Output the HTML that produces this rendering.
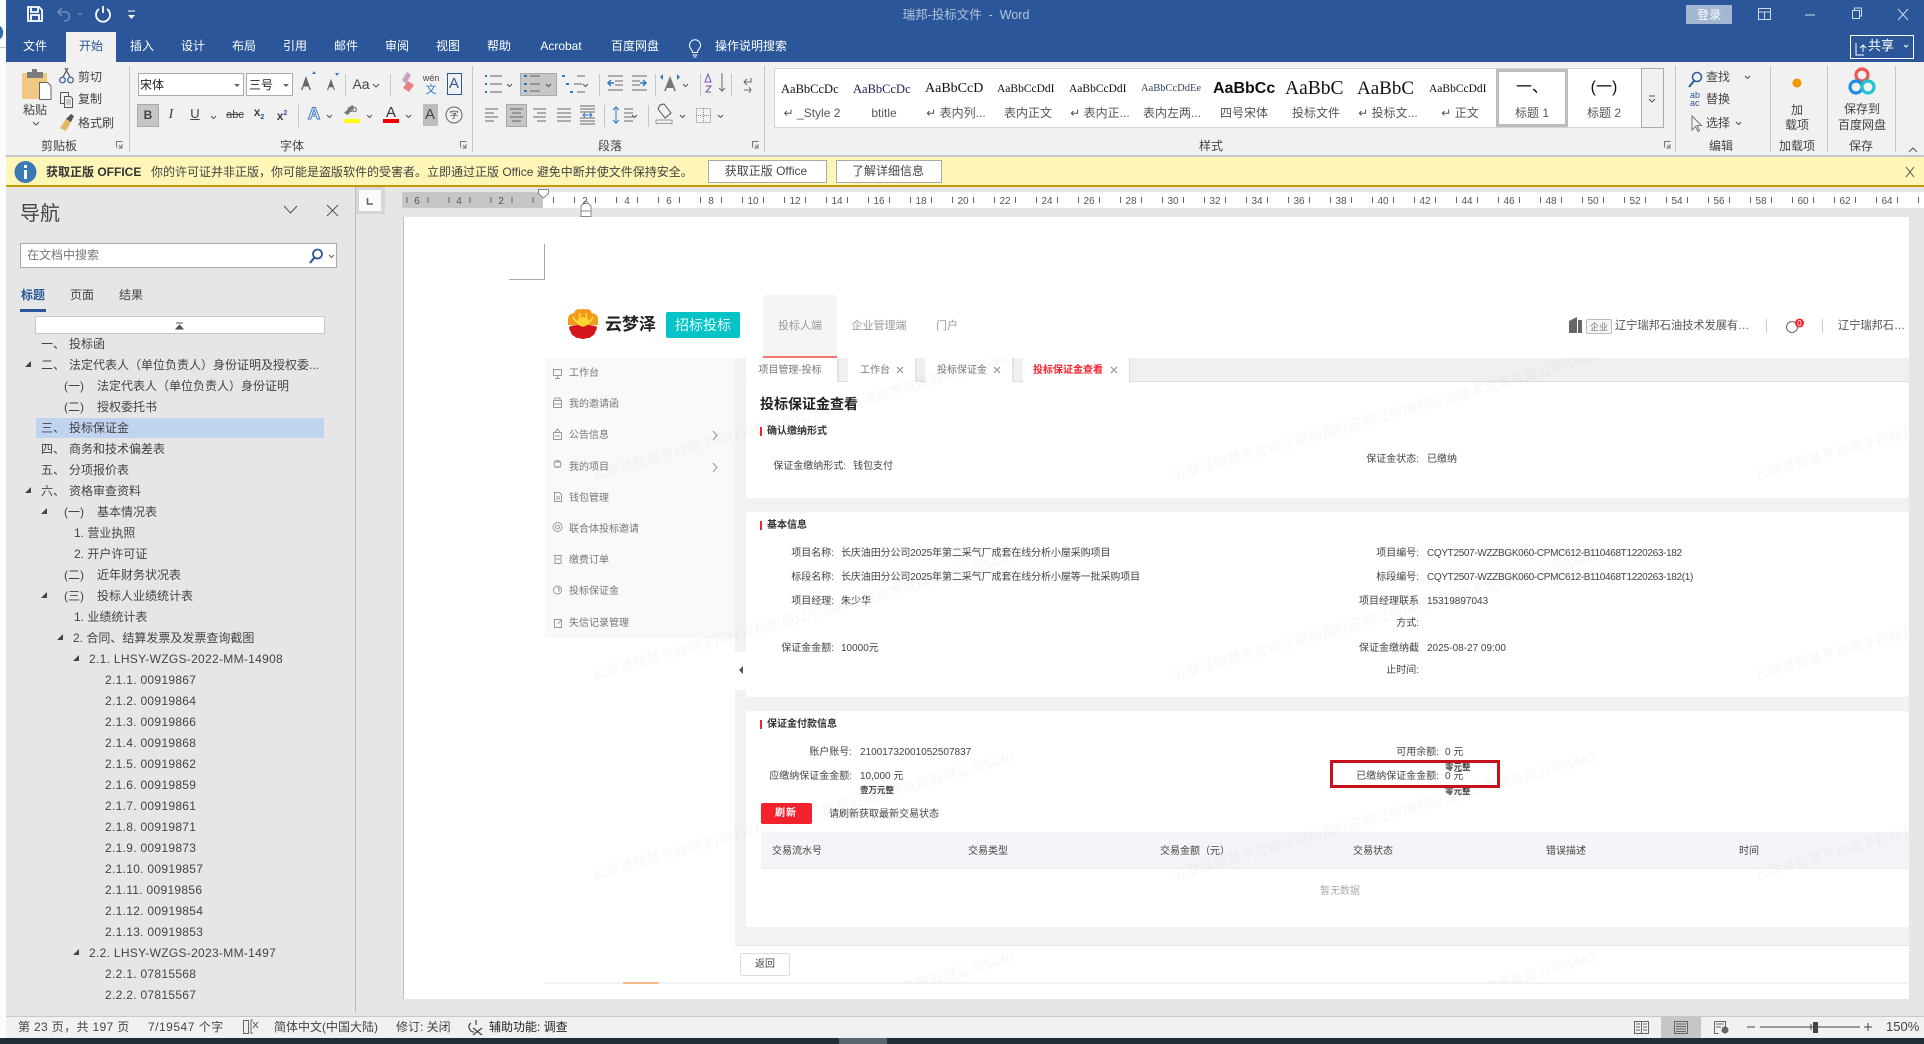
<!DOCTYPE html>
<html lang="zh"><head><meta charset="utf-8"><title>瑞邦-投标文件 - Word</title>
<style>
html,body{margin:0;padding:0}
body{position:relative;width:1924px;height:1044px;overflow:hidden;background:#e6e6e6;font:12px/16px "Liberation Sans","Noto Sans CJK SC",sans-serif;color:#444}
.b{position:absolute;box-sizing:border-box}
.t,.c,.r{position:absolute;white-space:nowrap;line-height:16px}
.t{transform:translateY(-50%)}
.c{transform:translate(-50%,-50%)}
.r{transform:translate(-100%,-50%)}
.w{color:#fff}
.w10{font-size:10px;color:#444}
.w10 .t,.w10 .r,.w10 .c{font-size:10px;margin-top:1px}
.h{font-weight:700;color:#333}
.s{font-family:"Liberation Serif","Noto Serif CJK SC",serif;color:#111;overflow:hidden;width:62px;text-align:left}
.l{color:#555;font-size:12px}
#ov{position:absolute;left:0;top:0;pointer-events:none}
</style></head><body>

<!-- left window sliver -->
<div class="b" style="left:0;top:0;width:6px;height:1038px;background:#fbfbfb"></div>
<div class="b" style="left:0;top:47px;width:6px;height:1px;background:#c8c8c8"></div>

<!-- title bar -->
<div class="b" style="left:6px;top:0;width:1918px;height:62px;background:#2b579a"></div>
<div class="c" style="left:966px;top:15px;color:#b4c4dc;font-size:12.5px">瑞邦-投标文件 &nbsp;-&nbsp; Word</div>
<div class="b" style="left:1686px;top:5px;width:46px;height:19px;background:#a3b6d2"></div>
<div class="c" style="left:1709px;top:15px;color:#fff">登录</div>
<div class="b" style="left:66px;top:32px;width:50px;height:30px;background:#f1f1f1"></div>
<div class="c w" style="left:35px;top:46px">文件</div>
<div class="c" style="left:91px;top:46px;color:#2b579a">开始</div>
<div class="c w" style="left:142px;top:46px">插入</div>
<div class="c w" style="left:193px;top:46px">设计</div>
<div class="c w" style="left:244px;top:46px">布局</div>
<div class="c w" style="left:295px;top:46px">引用</div>
<div class="c w" style="left:346px;top:46px">邮件</div>
<div class="c w" style="left:397px;top:46px">审阅</div>
<div class="c w" style="left:448px;top:46px">视图</div>
<div class="c w" style="left:499px;top:46px">帮助</div>
<div class="c w" style="left:561px;top:46px">Acrobat</div>
<div class="c w" style="left:635px;top:46px">百度网盘</div>
<div class="c w" style="left:751px;top:46px">操作说明搜索</div>
<div class="b" style="left:1850px;top:35px;width:64px;height:24px;border:1px solid #fff"></div>
<div class="c w" style="left:1881px;top:46px;font-size:13px">共享</div>

<!-- ribbon -->
<div class="b" style="left:6px;top:62px;width:1918px;height:95px;background:#f1f1f1;border-bottom:2px solid #c6c6c6"></div>
<div class="c" style="left:35px;top:110px">粘贴</div>
<div class="t" style="left:78px;top:77px">剪切</div>
<div class="t" style="left:78px;top:99px">复制</div>
<div class="t" style="left:78px;top:123px">格式刷</div>
<div class="c" style="left:59px;top:146px">剪贴板</div>
<div class="c" style="left:292px;top:146px">字体</div>
<div class="c" style="left:610px;top:146px">段落</div>
<div class="c" style="left:1211px;top:146px">样式</div>
<div class="c" style="left:1721px;top:146px">编辑</div>
<div class="c" style="left:1797px;top:146px">加载项</div>
<div class="c" style="left:1861px;top:146px">保存</div>

<div class="b" style="left:138px;top:73px;width:106px;height:23px;background:#fff;border:1px solid #aaa"></div>
<div class="b" style="left:246px;top:73px;width:47px;height:23px;background:#fff;border:1px solid #aaa"></div>
<div class="t" style="left:140px;top:85px;color:#222">宋体</div>
<div class="t" style="left:249px;top:85px;color:#222">三号</div>
<div class="c" style="left:361px;top:84px;font-size:14px">Aa</div>
<div class="b" style="left:137px;top:104px;width:22px;height:23px;background:#c6c6c6;border:1px solid #aaa"></div>
<div class="c" style="left:148px;top:115px;font-weight:700">B</div>
<div class="c" style="left:171px;top:115px;font-style:italic;font-family:'Liberation Serif',serif;font-size:14px">I</div>
<div class="c" style="left:195px;top:114px;text-decoration:underline;font-size:13px">U</div>
<div class="c" style="left:235px;top:115px;text-decoration:line-through;font-size:11px">abc</div>
<div class="c" style="left:259px;top:115px;font-weight:700">x<sub style="font-size:7px;color:#2b579a">2</sub></div>
<div class="c" style="left:282px;top:115px;font-weight:700">x<sup style="font-size:7px;color:#2b579a">2</sup></div>
<div class="c" style="left:314px;top:114px;font-size:17px;color:#fff;-webkit-text-stroke:1px #3a78c2;font-weight:700">A</div>
<div class="c" style="left:391px;top:113px;font-size:15px;color:#333">A</div>
<div class="b" style="left:423px;top:104px;width:15px;height:22px;background:#bdbdbd"></div>
<div class="c" style="left:430px;top:115px;font-size:15px;color:#444">A</div>
<div class="c" style="left:431px;top:78px;font-size:9px;color:#444">wén</div>
<div class="c" style="left:431px;top:90px;font-size:11px;color:#2b79c2">文</div>
<div class="c" style="left:454px;top:84px;font-size:15px;color:#2b579a">A</div>
<div class="c" style="left:454px;top:115px;font-size:9px">字</div>
<div class="c" style="left:352px;top:109px;font-size:9px;color:#444">ab</div>
<div class="b" style="left:520px;top:73px;width:37px;height:23px;background:#c6c6c6;border:1px solid #aaa"></div>
<div class="b" style="left:506px;top:104px;width:21px;height:23px;background:#c6c6c6;border:1px solid #aaa"></div>

<!-- styles gallery -->
<div class="b" style="left:774px;top:68px;width:890px;height:60px;background:#fff;border:1px solid #d4d4d4"></div>
<div class="b" style="left:1496px;top:69px;width:72px;height:58px;background:#fff;border:3px solid #bdbdbd"></div>
<div class="b" style="left:1641px;top:68px;width:23px;height:60px;background:#f1f1f1;border:1px solid #aaa"></div>
<div class="c s" style="left:812px;top:89px;font-size:12.5px">AaBbCcDc</div>
<div class="c s" style="left:884px;top:89px;font-size:12.5px;color:#225">AaBbCcDc</div>
<div class="c s" style="left:956px;top:89px;font-size:14px">AaBbCcD</div>
<div class="c s" style="left:1028px;top:89px;font-size:11.5px">AaBbCcDdI</div>
<div class="c s" style="left:1100px;top:89px;font-size:11.5px">AaBbCcDdI</div>
<div class="c s" style="left:1172px;top:89px;font-size:10.5px;color:#345">AaBbCcDdEe</div>
<div class="c s" style="left:1244px;top:89px;font-size:16px;font-family:'Liberation Sans',sans-serif;font-weight:700">AaBbCc</div>
<div class="c s" style="left:1316px;top:89px;font-size:19.5px">AaBbC</div>
<div class="c s" style="left:1388px;top:89px;font-size:19px">AaBbC</div>
<div class="c s" style="left:1460px;top:89px;font-size:11.5px">AaBbCcDdI</div>
<div class="c" style="left:1532px;top:88px;font-size:16px;color:#111">一、</div>
<div class="c" style="left:1604px;top:88px;font-size:16px;color:#111">(一)</div>
<div class="c l" style="left:812px;top:113px">↵ _Style 2</div>
<div class="c l" style="left:884px;top:113px">btitle</div>
<div class="c l" style="left:956px;top:113px">↵ 表内列...</div>
<div class="c l" style="left:1028px;top:113px">表内正文</div>
<div class="c l" style="left:1100px;top:113px">↵ 表内正...</div>
<div class="c l" style="left:1172px;top:113px">表内左两...</div>
<div class="c l" style="left:1244px;top:113px">四号宋体</div>
<div class="c l" style="left:1316px;top:113px">投标文件</div>
<div class="c l" style="left:1388px;top:113px">↵ 投标文...</div>
<div class="c l" style="left:1460px;top:113px">↵ 正文</div>
<div class="c l" style="left:1532px;top:113px">标题 1</div>
<div class="c l" style="left:1604px;top:113px">标题 2</div>

<div class="c" style="left:1718px;top:77px">查找</div>
<div class="c" style="left:1718px;top:99px">替换</div>
<div class="c" style="left:1718px;top:123px">选择</div>
<div class="c" style="left:1695px;top:99px;font-size:9px;line-height:8px;color:#2b579a">ab<br>ac</div>
<div class="c" style="left:1797px;top:110px">加</div>
<div class="c" style="left:1797px;top:125px">载项</div>
<div class="c" style="left:1862px;top:109px">保存到</div>
<div class="c" style="left:1862px;top:125px">百度网盘</div>

<!-- yellow message bar -->
<div class="b" style="left:6px;top:157px;width:1918px;height:30px;background:#fdf6b6;border-bottom:2px solid #c49a00"></div>
<div class="t" style="left:46px;top:172px;font-weight:700;color:#333">获取正版 OFFICE</div>
<div class="t" style="left:151px;top:172px;color:#444">你的许可证并非正版，你可能是盗版软件的受害者。立即通过正版 Office 避免中断并使文件保持安全。</div>
<div class="b" style="left:708px;top:160px;width:119px;height:23px;background:#fff;border:1px solid #aaa"></div>
<div class="c" style="left:766px;top:171px">获取正版 Office</div>
<div class="b" style="left:836px;top:160px;width:106px;height:23px;background:#fff;border:1px solid #aaa"></div>
<div class="c" style="left:888px;top:171px">了解详细信息</div>

<!-- nav pane -->
<div class="b" style="left:355px;top:187px;width:1px;height:826px;background:#bdbdbd"></div>
<div class="t" style="left:20px;top:214px;font-size:20px;line-height:26px;color:#444">导航</div>
<div class="b" style="left:20px;top:243px;width:317px;height:25px;background:#fff;border:1px solid #aaa"></div>
<div class="t" style="left:27px;top:255px;color:#777">在文档中搜索</div>
<div class="t" style="left:21px;top:295px;color:#2b579a;font-weight:700">标题</div>
<div class="t" style="left:70px;top:295px">页面</div>
<div class="t" style="left:119px;top:295px">结果</div>
<div class="b" style="left:20px;top:309px;width:26px;height:3px;background:#2b579a"></div>
<div class="b" style="left:35px;top:316px;width:290px;height:18px;background:#fff;border:1px solid #c8c8c8"></div>
<div class="b" style="left:36px;top:418px;width:288px;height:20px;background:#c0d3ef"></div>

<div class="t" style="left:41px;top:344px">一、</div><div class="t" style="left:69px;top:344px">投标函</div>
<div class="t" style="left:41px;top:365px">二、</div><div class="t" style="left:69px;top:365px">法定代表人（单位负责人）身份证明及授权委...</div>
<div class="t" style="left:64px;top:386px">(一)</div><div class="t" style="left:97px;top:386px">法定代表人（单位负责人）身份证明</div>
<div class="t" style="left:64px;top:407px">(二)</div><div class="t" style="left:97px;top:407px">授权委托书</div>
<div class="t" style="left:41px;top:428px">三、</div><div class="t" style="left:69px;top:428px">投标保证金</div>
<div class="t" style="left:41px;top:449px">四、</div><div class="t" style="left:69px;top:449px">商务和技术偏差表</div>
<div class="t" style="left:41px;top:470px">五、</div><div class="t" style="left:69px;top:470px">分项报价表</div>
<div class="t" style="left:41px;top:491px">六、</div><div class="t" style="left:69px;top:491px">资格审查资料</div>
<div class="t" style="left:64px;top:512px">(一)</div><div class="t" style="left:97px;top:512px">基本情况表</div>
<div class="t" style="left:74px;top:533px">1. 营业执照</div>
<div class="t" style="left:74px;top:554px">2. 开户许可证</div>
<div class="t" style="left:64px;top:575px">(二)</div><div class="t" style="left:97px;top:575px">近年财务状况表</div>
<div class="t" style="left:64px;top:596px">(三)</div><div class="t" style="left:97px;top:596px">投标人业绩统计表</div>
<div class="t" style="left:74px;top:617px">1. 业绩统计表</div>
<div class="t" style="left:73px;top:638px">2. 合同、结算发票及发票查询截图</div>
<div class="t" style="left:89px;top:659px;letter-spacing:.3px">2.1. LHSY-WZGS-2022-MM-14908</div>
<div class="t" style="left:105px;top:680px;letter-spacing:.3px">2.1.1. 00919867</div>
<div class="t" style="left:105px;top:701px;letter-spacing:.3px">2.1.2. 00919864</div>
<div class="t" style="left:105px;top:722px;letter-spacing:.3px">2.1.3. 00919866</div>
<div class="t" style="left:105px;top:743px;letter-spacing:.3px">2.1.4. 00919868</div>
<div class="t" style="left:105px;top:764px;letter-spacing:.3px">2.1.5. 00919862</div>
<div class="t" style="left:105px;top:785px;letter-spacing:.3px">2.1.6. 00919859</div>
<div class="t" style="left:105px;top:806px;letter-spacing:.3px">2.1.7. 00919861</div>
<div class="t" style="left:105px;top:827px;letter-spacing:.3px">2.1.8. 00919871</div>
<div class="t" style="left:105px;top:848px;letter-spacing:.3px">2.1.9. 00919873</div>
<div class="t" style="left:105px;top:869px;letter-spacing:.3px">2.1.10. 00919857</div>
<div class="t" style="left:105px;top:890px;letter-spacing:.3px">2.1.11. 00919856</div>
<div class="t" style="left:105px;top:911px;letter-spacing:.3px">2.1.12. 00919854</div>
<div class="t" style="left:105px;top:932px;letter-spacing:.3px">2.1.13. 00919853</div>
<div class="t" style="left:89px;top:953px;letter-spacing:.3px">2.2. LHSY-WZGS-2023-MM-1497</div>
<div class="t" style="left:105px;top:974px;letter-spacing:.3px">2.2.1. 07815568</div>
<div class="t" style="left:105px;top:995px;letter-spacing:.3px">2.2.2. 07815567</div>

<!-- ruler -->
<div class="b" style="left:402px;top:192px;width:1522px;height:16px;background:#fff"></div>
<div class="b" style="left:402px;top:192px;width:141px;height:16px;background:#c6c6c6"></div>
<div class="b" style="left:356px;top:187px;width:29px;height:27px;background:#d6d6d6"></div>
<div class="b" style="left:359px;top:190px;width:22px;height:21px;background:#fafafa"></div>

<!-- page -->
<div class="b" style="left:403px;top:217px;width:1506px;height:782px;background:#fff;border-left:1px solid #bdbdbd"></div>

<!-- web app -->
<div class="b" style="left:735px;top:358px;width:1174px;height:587px;background:#f2f2f2"></div>
<div class="b" style="left:545px;top:358px;width:190px;height:280px;background:#f9f9f9"></div>
<div class="b" style="left:735px;top:652px;width:14px;height:38px;background:#fff;border-radius:0 5px 5px 0"></div>
<div class="b" style="left:763px;top:295px;width:74px;height:63px;background:#f5f5f5;border-bottom:2px solid #f0766e"></div>
<div class="t" style="left:605px;top:325px;font-size:17px;line-height:22px;font-weight:700;color:#222">云梦泽</div>
<div class="b" style="left:666px;top:312px;width:74px;height:26px;background:#05c3c6;border-radius:2px"></div>
<div class="c" style="left:703px;top:325px;font-size:14px;color:#e6ffff">招标投标</div>
<div class="c" style="left:800px;top:326px;font-size:11px;color:#999">投标人端</div>
<div class="c" style="left:879px;top:326px;font-size:11px;color:#999">企业管理端</div>
<div class="c" style="left:947px;top:326px;font-size:11px;color:#999">门户</div>
<div class="b" style="left:1586px;top:319px;width:26px;height:15px;background:#f6f6f6;border:1px solid #bbb;border-radius:2px"></div>
<div class="c" style="left:1599px;top:327px;font-size:9px;color:#777">企业</div>
<div class="t" style="left:1615px;top:326px;font-size:11.2px;color:#555">辽宁瑞邦石油技术发展有…</div>
<div class="b" style="left:1766px;top:319px;width:1px;height:14px;background:#ccc"></div>
<div class="b" style="left:1822px;top:319px;width:1px;height:14px;background:#ccc"></div>
<div class="t" style="left:1838px;top:326px;font-size:11.2px;color:#555">辽宁瑞邦石…</div>

<div class="w10">
<div class="t" style="left:569px;top:373px;color:#777">工作台</div>
<div class="t" style="left:569px;top:404px;color:#777">我的邀请函</div>
<div class="t" style="left:569px;top:435px;color:#777">公告信息</div>
<div class="t" style="left:569px;top:467px;color:#777">我的项目</div>
<div class="t" style="left:569px;top:498px;color:#777">钱包管理</div>
<div class="t" style="left:569px;top:529px;color:#777">联合体投标邀请</div>
<div class="t" style="left:569px;top:560px;color:#777">缴费订单</div>
<div class="t" style="left:569px;top:591px;color:#777">投标保证金</div>
<div class="t" style="left:569px;top:623px;color:#777">失信记录管理</div>

<div class="b" style="left:746px;top:358px;width:1163px;height:24px;background:#f0f0f0;border-bottom:1px solid #ddd"></div>
<div class="b" style="left:746px;top:358px;width:93px;height:24px;background:#fff;border-right:2px solid #e4e4e4"></div>
<div class="b" style="left:848px;top:358px;width:69px;height:24px;background:#fff;border-right:2px solid #e4e4e4"></div>
<div class="b" style="left:925px;top:358px;width:89px;height:24px;background:#fff;border-right:2px solid #e4e4e4"></div>
<div class="b" style="left:1023px;top:358px;width:107px;height:25px;background:#fff;border-right:1px solid #ddd"></div>
<div class="c" style="left:790px;top:370px;color:#777">项目管理-投标</div>
<div class="c" style="left:875px;top:370px;color:#777">工作台</div>
<div class="c" style="left:962px;top:370px;color:#777">投标保证金</div>
<div class="c" style="left:1068px;top:370px;color:#f5222d;font-weight:700">投标保证金查看</div>

<div class="b" style="left:746px;top:382px;width:1163px;height:116px;background:#fff;border-radius:3px"></div>
<div class="b" style="left:746px;top:512px;width:1163px;height:185px;background:#fff;border-radius:3px"></div>
<div class="b" style="left:746px;top:711px;width:1163px;height:216px;background:#fff;border-radius:3px"></div>
<div class="b" style="left:735px;top:945px;width:1174px;height:38px;background:#fff;border-top:1px solid #e4e4e4"></div>

<div class="t" style="left:760px;top:403px;font-size:14px;line-height:20px;font-weight:700;color:#222">投标保证金查看</div>
<div class="b" style="left:760px;top:427px;width:2px;height:9px;background:#f5222d"></div>
<div class="t h" style="left:767px;top:431px">确认缴纳形式</div>
<div class="r" style="left:846px;top:466px">保证金缴纳形式:</div><div class="t" style="left:853px;top:466px">钱包支付</div>
<div class="r" style="left:1419px;top:459px">保证金状态:</div><div class="t" style="left:1427px;top:459px">已缴纳</div>

<div class="b" style="left:760px;top:521px;width:2px;height:9px;background:#f5222d"></div>
<div class="t h" style="left:767px;top:525px">基本信息</div>
<div class="r" style="left:834px;top:553px">项目名称:</div><div class="t" style="left:841px;top:553px;letter-spacing:-.1px">长庆油田分公司2025年第二采气厂成套在线分析小屋采购项目</div>
<div class="r" style="left:834px;top:577px">标段名称:</div><div class="t" style="left:841px;top:577px;letter-spacing:-.1px">长庆油田分公司2025年第二采气厂成套在线分析小屋等一批采购项目</div>
<div class="r" style="left:834px;top:601px">项目经理:</div><div class="t" style="left:841px;top:601px">朱少华</div>
<div class="r" style="left:834px;top:648px">保证金金额:</div><div class="t" style="left:841px;top:648px">10000元</div>
<div class="r" style="left:1419px;top:553px">项目编号:</div><div class="t" style="left:1427px;top:553px;letter-spacing:-.33px">CQYT2507-WZZBGK060-CPMC612-B110468T1220263-182</div>
<div class="r" style="left:1419px;top:577px">标段编号:</div><div class="t" style="left:1427px;top:577px;letter-spacing:-.33px">CQYT2507-WZZBGK060-CPMC612-B110468T1220263-182(1)</div>
<div class="r" style="left:1419px;top:601px">项目经理联系</div><div class="t" style="left:1427px;top:601px">15319897043</div>
<div class="r" style="left:1419px;top:623px">方式:</div>
<div class="r" style="left:1419px;top:648px">保证金缴纳截</div><div class="t" style="left:1427px;top:648px">2025-08-27 09:00</div>
<div class="r" style="left:1419px;top:670px">止时间:</div>

<div class="b" style="left:760px;top:720px;width:2px;height:9px;background:#f5222d"></div>
<div class="t h" style="left:767px;top:724px">保证金付款信息</div>
<div class="r" style="left:852px;top:752px">账户账号:</div><div class="t" style="left:860px;top:752px">21001732001052507837</div>
<div class="r" style="left:852px;top:776px">应缴纳保证金金额:</div><div class="t" style="left:860px;top:776px">10,000 元</div>
<div class="t" style="left:860px;top:789px;font-size:8.5px;font-weight:700">壹万元整</div>
<div class="r" style="left:1439px;top:752px">可用余额:</div><div class="t" style="left:1445px;top:752px">0 元</div>
<div class="t" style="left:1445px;top:766px;font-size:8.5px;font-weight:700">零元整</div>
<div class="r" style="left:1439px;top:776px">已缴纳保证金金额:</div><div class="t" style="left:1445px;top:776px">0 元</div>
<div class="t" style="left:1445px;top:790px;font-size:8.5px;font-weight:700">零元整</div>
<div class="b" style="left:761px;top:803px;width:51px;height:21px;background:#f5222d;border-radius:2px"></div>
<div class="c" style="left:786px;top:813px;color:#fff;font-weight:700;letter-spacing:1px">刷新</div>
<div class="t" style="left:829px;top:814px">请刷新获取最新交易状态</div>
<div class="b" style="left:761px;top:832px;width:1148px;height:37px;background:#f4f5f9;border-bottom:1px solid #eceef2"></div>
<div class="t" style="left:772px;top:851px">交易流水号</div>
<div class="t" style="left:968px;top:851px">交易类型</div>
<div class="t" style="left:1160px;top:851px">交易金额（元）</div>
<div class="t" style="left:1353px;top:851px">交易状态</div>
<div class="t" style="left:1546px;top:851px">错误描述</div>
<div class="t" style="left:1739px;top:851px">时间</div>
<div class="t" style="left:1320px;top:891px;color:#aaa">暂无数据</div>
<div class="b" style="left:740px;top:953px;width:50px;height:23px;background:#fff;border:1px solid #ddd;border-radius:2px"></div>
<div class="c" style="left:765px;top:964px">返回</div>
</div>
<div class="b" style="left:545px;top:982px;width:1364px;height:2px;background:#eef3f8"></div>
<div class="b" style="left:623px;top:982px;width:36px;height:2px;background:#f7b98a"></div>

<!-- status bar -->
<div class="b" style="left:6px;top:1016px;width:1918px;height:22px;background:#f1f1f1;border-top:1px solid #c8c8c8"></div>
<div class="b" style="left:1661px;top:1017px;width:40px;height:21px;background:#c6c6c6"></div>
<div class="t" style="left:18px;top:1027px;letter-spacing:.35px">第 23 页，共 197 页</div>
<div class="t" style="left:148px;top:1027px;letter-spacing:.5px">7/19547 个字</div>
<div class="t" style="left:274px;top:1027px">简体中文(中国大陆)</div>
<div class="t" style="left:396px;top:1027px">修订: 关闭</div>
<div class="t" style="left:489px;top:1027px;color:#222">辅助功能: 调查</div>
<div class="t" style="left:1886px;top:1027px;font-size:13px">150%</div>
<div class="b" style="left:0;top:1038px;width:1924px;height:6px;background:#1f2e38"></div>
<div class="b" style="left:839px;top:1038px;width:48px;height:6px;background:#59646c"></div>

<!-- overlay graphics -->
<svg id="ov" width="1924" height="1044" viewBox="0 0 1924 1044" fill="none">
<defs>
<clipPath id="wm"><rect x="545" y="358" width="1364" height="625"/></clipPath>
<pattern id="tk" x="553" y="195" width="21" height="10" patternUnits="userSpaceOnUse"><rect x="0" y="2" width="1" height="6" fill="#666"/></pattern>
<pattern id="tk2" x="406.5" y="195" width="21" height="10" patternUnits="userSpaceOnUse"><rect x="0" y="2" width="1" height="6" fill="#666"/></pattern>
</defs>
<!-- window sliver -->
<path d="M0 26a5 7 0 0 1 0 13z" fill="#2b6cb0"/>

<!-- QAT -->
<g stroke="#fff" stroke-width="1.8"><path d="M28 7h11l3 3v11H28z"/><path d="M31 7v5h7V7M31 21v-6h8v6"/></g>
<g stroke="#6f8bb8" stroke-width="1.6"><path d="M62 8l-4 4 4 4"/><path d="M58 12h7a4.5 4.5 0 0 1 0 9h-1"/><path d="M78 13l2 2 2-2" stroke-width="1"/></g>
<g stroke="#fff" stroke-width="1.8"><path d="M99 9a7 7 0 1 0 8 0"/><path d="M103 6v7"/></g>
<path d="M128 11h7" stroke="#fff"/><path d="M128 15h7l-3.5 4z" fill="#fff"/>
<!-- bulb, share, win controls -->
<g stroke="#fff"><path d="M691 49a5.5 5.5 0 1 1 8 0c-1 1-1.500 2-1.500 3.500h-5c0-1.500-.5-2.500-1.500-3.500zM692.500 55h5M693.500 57h3"/>
<path d="M1856 43v12h8M1860 48l3-3 3 3M1863 45v7" stroke-width="1"/><path d="M1904 45l2 2 2-2"/></g>
<g stroke="#cfd9e8"><path d="M1758.500 8.500h12v11h-12zM1758.500 12h12M1764.500 12v7"/><path d="M1805 15h10"/><path d="M1852.500 10.500h7v8h-7zM1854.500 10v-2h7v8h-2"/><path d="M1898 9l10 11M1908 9l-10 11"/></g>

<!-- clipboard group -->
<rect x="22" y="73" width="25" height="26" fill="#efc981"/><rect x="27" y="72" width="16" height="6" fill="#7c7c7c"/><rect x="32" y="69" width="5" height="5" fill="#7c7c7c"/>
<path d="M39.500 82.500h8l3.500 3.500v13.500H39.500z" fill="#fff" stroke="#666"/>
<path d="M33 122l3 3 3-3" stroke="#555"/>
<g stroke="#4a6fa5" stroke-width="1.4"><circle cx="62.500" cy="80" r="2.800"/><circle cx="70.500" cy="80" r="2.800"/></g><path d="M63 77l5-9M70 77l-5-9" stroke="#666" stroke-width="1.300"/>
<g stroke="#555"><path d="M60.500 92.500h8v4M60.500 92.500v11h4"/><path d="M64.500 96.500h6l2 2v9h-8z" fill="#f1f1f1"/><path d="M66 100h5M66 102h5M66 104h5" stroke="#999"/></g>
<path d="M60 128l6-9 5 3-5 9z" fill="#e3b968"/><path d="M66 119l5-5 3 2-3 6z" fill="#555"/>
<!-- separators -->
<g stroke="#c6c6c6"><path d="M129.500 66v86M472.500 66v86M764.500 66v86M1675.500 66v86M1770.500 66v86M1827.500 66v86M1895.500 66v86"/>
<path d="M345.500 74v22M390.500 74v22M298.500 105v22M599.500 74v22M655.500 74v22M700.500 74v22M731.500 74v22M604.500 105v22M648.500 105v22"/></g>
<!-- dialog launchers -->
<g stroke="#777"><path d="M116.500 147.500v-6h6M119 145l3 3M118 148h4v-4M460.500 147.500v-6h6M463 145l3 3M462 148h4v-4M752.500 147.500v-6h6M755 145l3 3M754 148h4v-4M1664.500 147.500v-6h6M1667 145l3 3M1666 148h4v-4"/></g>
<path d="M1909 152l4-4 4 4" stroke="#555"/>
<!-- dropdown triangles -->
<g fill="#666"><path d="M234 84h6l-3 3zM283 84h6l-3 3z"/></g>
<g stroke="#555"><path d="M373 84l3 3 3-3M211 116l2.500 2.500 2.500-2.500M327 115l2.500 2.500 2.500-2.500M367 115l2.500 2.500 2.500-2.500M406 115l2.500 2.500 2.500-2.500M507 84l2.500 2.500 2.500-2.500M546 84l2.500 2.500 2.500-2.500M583 84l2.500 2.500 2.500-2.500M683 84l2.500 2.500 2.500-2.500M632 115l2.500 2.500 2.500-2.500M680 115l2.500 2.500 2.500-2.500M718 115l2.500 2.500 2.500-2.500M1745 76l2.500 2.500 2.500-2.500M1736 122l2.500 2.500 2.500-2.500"/></g>
<!-- font group icons -->
<path d="M306 76l-5 14h1.500l1.200-3.500h4.600l1.200 3.500h1.500l-5-14z" fill="#666"/><path d="M312 74l2-3 2 3z" fill="#3a78c2"/>
<path d="M331 79l-4 11h1.200l.9-2.700h3.800l.9 2.700h1.200l-4-11z" fill="#666"/><path d="M335 73l2 3 2-3z" fill="#3a78c2"/>
<path d="M402 80l5-8 4 3-5 9z" fill="#c9a0c0"/><path d="M403 88l5-7 6 4-5 7z" fill="#e97f86"/>
<rect x="447.500" y="73.500" width="14" height="21" stroke="#2b579a"/>
<circle cx="454" cy="115" r="8" stroke="#666"/>
<path d="M344 113l8-8 2 2-6 8z" fill="#777"/><rect x="344" y="119" width="16" height="4" fill="#ffff00"/><rect x="383" y="119" width="16" height="4" fill="#f00000"/>
<!-- paragraph icons -->
<g stroke="#666"><path d="M490 76h12M490 84h12M490 92h12M530 76h10M530 84h10M530 91h10M577 76h8M574 84h8M577 92h8"/></g>
<g fill="#2b79c2"><rect x="485" y="75" width="2" height="2"/><rect x="485" y="83" width="2" height="2"/><rect x="485" y="91" width="2" height="2"/><rect x="524" y="75" width="3" height="2"/><rect x="524" y="83" width="3" height="2"/><rect x="524" y="90" width="3" height="2"/><rect x="562" y="75" width="3" height="2"/><rect x="566" y="83" width="3" height="2"/><rect x="570" y="91" width="3" height="2"/></g>
<g stroke="#666"><path d="M608 76h15M615 81h8M615 85h8M608 90h15M632 76h15M632 81h8M632 85h8M632 90h15"/></g>
<g stroke="#2b79c2" stroke-width="1.5"><path d="M614 83h-6M611 80l-3 3 3 3M640 83h6M643 80l3 3-3 3"/></g>
<path d="M670 76l-6 15h1.800l1.200-3h6l1.200 3h1.800l-6-15z" fill="#777"/><path d="M660 77l3-3v6zM680 77l-3-3v6z" fill="#2b79c2"/>
<path d="M722 73v18M719 88l3 3 3-3" stroke="#666"/><path d="M708 74l-3 8h6zM706 86h5l-5 6h5" stroke="#7a4fb0"/>
<path d="M751 78v4h-7M747 79l-3 3 3 3M744 90h6M749 87l2 3-2 3" stroke="#666"/>
<g stroke="#666"><path d="M485 109h13M485 113h9M485 117h13M485 121h9M510 109h13M512 113h9M510 117h13M512 121h9M533 109h13M537 113h9M533 117h13M537 121h9M557 109h14M557 113h14M557 117h14M557 121h14M580 106h15M580 109h15M580 121h15M580 124h15M580 112h15M580 118h15"/></g>
<path d="M583 115h9M585 113l-2 2 2 2M590 113l2 2-2 2" stroke="#2b79c2"/>
<path d="M624 109h9M624 113h9M624 117h9M624 121h9" stroke="#666"/><path d="M616 107v16M613 110l3-3 3 3M613 120l3 3 3-3" stroke="#2b79c2"/>
<path d="M660 105l4-1 7 9-6 5-7-9z" stroke="#555"/><rect x="656" y="120" width="16" height="3.500" stroke="#999"/>
<rect x="696.500" y="108.500" width="14" height="14" stroke="#888" stroke-dasharray="1 1"/><path d="M703.500 108v15M696 115.500h15" stroke="#888" stroke-dasharray="1 1"/>
<!-- gallery scroll and edit -->
<path d="M1649 96h6M1649 99l3 3 3-3" stroke="#555"/>
<path d="M1689 87l5-6" stroke="#2b579a" stroke-width="2"/><circle cx="1697" cy="77" r="4.500" stroke="#2b579a" stroke-width="1.500"/>
<path d="M1692 116v14l3.500-3.500 2.500 5 1.500-1-2.500-5h4.500z" stroke="#777"/>
<circle cx="1797" cy="83" r="4.500" fill="#f39800"/>
<g stroke-width="3.200"><circle cx="1862" cy="75" r="6" stroke="#e9584f"/><circle cx="1856" cy="87" r="6" stroke="#1f8fe5"/><circle cx="1868" cy="87" r="6" stroke="#21c5cf"/></g>
<!-- message bar -->
<circle cx="25.500" cy="172" r="11" fill="#3a7ab5"/><rect x="24" y="170" width="3" height="9" fill="#fff"/><rect x="24" y="165" width="3" height="3" fill="#fff"/>
<path d="M1906 167l8 10M1914 167l-8 10" stroke="#555"/>
<!-- nav pane icons -->
<path d="M284 206l6.500 7 6.500-7M327 205l11 11M338 205l-11 11" stroke="#555"/>
<circle cx="317.500" cy="254" r="4.500" stroke="#2b579a" stroke-width="1.800"/><path d="M314 258l-4 5" stroke="#2b579a" stroke-width="2.200"/><path d="M329 255l2.500 2.500 2.500-2.500" stroke="#666"/>
<path d="M176 323h7M176 329l3.500-4 3.500 4z" fill="#555" stroke="#555"/>
<g fill="#444"><path d="M31 361v6h-6zM31 487v6h-6zM47 508v6h-6zM47 592v6h-6zM63 634v6h-6zM79 655v6h-6zM79 949v6h-6z"/></g>
<!-- ruler -->
<rect x="553" y="195" width="1371" height="10" fill="url(#tk)"/>
<rect x="406" y="195" width="130" height="10" fill="url(#tk2)"/>
<path d="M538.500 189.500h10v4l-5 4.500-5-4.500z" fill="#fff" stroke="#888"/>
<path d="M581 206l5-5 5 5v5h-10zM581 211v5.500h10V211" fill="#fff" stroke="#888"/>
<path d="M367.500 198v6h5.500" stroke="#666" stroke-width="1.600"/>
<g fill="#555" font-family="Liberation Sans,sans-serif" font-size="10" text-anchor="middle">
<text x="417" y="204">6</text><text x="459" y="204">4</text><text x="501" y="204">2</text>
<text x="585" y="204">2</text><text x="627" y="204">4</text><text x="669" y="204">6</text><text x="711" y="204">8</text><text x="753" y="204">10</text><text x="795" y="204">12</text><text x="837" y="204">14</text><text x="879" y="204">16</text><text x="921" y="204">18</text><text x="963" y="204">20</text><text x="1005" y="204">22</text><text x="1047" y="204">24</text><text x="1089" y="204">26</text><text x="1131" y="204">28</text><text x="1173" y="204">30</text><text x="1215" y="204">32</text><text x="1257" y="204">34</text><text x="1299" y="204">36</text><text x="1341" y="204">38</text><text x="1383" y="204">40</text><text x="1425" y="204">42</text><text x="1467" y="204">44</text><text x="1509" y="204">46</text><text x="1551" y="204">48</text><text x="1593" y="204">50</text><text x="1635" y="204">52</text><text x="1677" y="204">54</text><text x="1719" y="204">56</text><text x="1761" y="204">58</text><text x="1803" y="204">60</text><text x="1845" y="204">62</text><text x="1887" y="204">64</text>
</g>
<path d="M544.500 244v35.500H509" stroke="#a8a8a8"/>
<!-- logo -->
<path d="M583 339c-2 0-3-1-5-1-2 0-3-1-4-2-2-1-3-2-3-4-1-1-2-3-2-5 4-3 24-3 28 0 0 2-1 4-2 5 0 2-1 3-3 4-1 1-2 2-4 2-2 0-3 1-5 1z" fill="#d5141c"/>
<g fill="#f39a1c"><ellipse cx="575" cy="319" rx="7" ry="6" /><ellipse cx="591" cy="319" rx="7" ry="6"/><ellipse cx="579" cy="314" rx="5" ry="5"/><ellipse cx="587" cy="314" rx="5" ry="5"/><ellipse cx="583" cy="313" rx="4" ry="4"/><rect x="568" y="320" width="30" height="5"/></g>
<path d="M583 326c-3-4-4-9-3-13M583 326c3-4 4-9 3-13M583 326c-5-2-8-5-10-9M583 326c5-2 8-5 10-9" stroke="#ffe04a" stroke-width="1.500"/>
<ellipse cx="583" cy="322" rx="6" ry="4.500" fill="#ffd530"/>
<!-- app header icons -->
<path d="M1569 321l8-4v16h-8zM1578 320h4v13h-4z" fill="#666"/>
<circle cx="1792" cy="327" r="5.500" stroke="#666"/><circle cx="1799.500" cy="323" r="4.500" fill="#f5222d"/>
<text x="1799.500" y="326" font-size="8" fill="#fff" text-anchor="middle" font-family="Liberation Sans,sans-serif">0</text>
<!-- sidebar icons -->
<g stroke="#999"><rect x="553.500" y="369.500" width="8" height="6"/><path d="M557.500 376v2M555 378.500h5"/><rect x="553.500" y="400.500" width="8" height="7"/><path d="M555 400v-2h5v2M553.500 404h8"/><path d="M553.500 432.500h8v7h-8zM555 432l2.500-3 2.500 3M555 436h5"/><circle cx="557.500" cy="464" r="3.500"/><path d="M554 467h7M554 462h7"/><path d="M554.500 492.500h5l2 2v7h-7zM556 497h4M556 499h4"/><circle cx="557.500" cy="527" r="4.500"/><circle cx="557.500" cy="527" r="2"/><path d="M554 555.500h8M555 555.500v8h6v-8M556 559h4"/><circle cx="557.500" cy="590" r="4"/><path d="M557 588h2v4"/><path d="M554.500 619.500h7v8h-7zM558 624l4-5"/>
<path d="M713 431l4 4.500-4 4.500M713 463l4 4.500-4 4.500" stroke="#999"/></g>
<path d="M743 666v8l-4-4z" fill="#555"/>
<path d="M897 367l6 6M903 367l-6 6M994 367l6 6M1000 367l-6 6M1111 367l6 6M1117 367l-6 6" stroke="#888"/>
<!-- watermarks -->
<g clip-path="url(#wm)" fill="#000" fill-opacity=".04" font-family="Liberation Sans,Noto Sans CJK SC,sans-serif" font-size="14">
<text transform="translate(594 480) rotate(-15.700)">云梦泽智慧平台电子招标投标应用辽宁瑞邦石油技术发展有限公司5440</text>
<text transform="translate(1175 480) rotate(-15.700)">云梦泽智慧平台电子招标投标应用辽宁瑞邦石油技术发展有限公司5440</text>
<text transform="translate(1756 480) rotate(-15.700)">云梦泽智慧平台电子招标投标应用辽宁瑞邦石油技术发展有限公司5440</text>
<text transform="translate(594 680) rotate(-15.700)">云梦泽智慧平台电子招标投标应用辽宁瑞邦石油技术发展有限公司5440</text>
<text transform="translate(1175 680) rotate(-15.700)">云梦泽智慧平台电子招标投标应用辽宁瑞邦石油技术发展有限公司5440</text>
<text transform="translate(1756 680) rotate(-15.700)">云梦泽智慧平台电子招标投标应用辽宁瑞邦石油技术发展有限公司5440</text>
<text transform="translate(594 880) rotate(-15.700)">云梦泽智慧平台电子招标投标应用辽宁瑞邦石油技术发展有限公司5440</text>
<text transform="translate(1175 880) rotate(-15.700)">云梦泽智慧平台电子招标投标应用辽宁瑞邦石油技术发展有限公司5440</text>
<text transform="translate(1756 880) rotate(-15.700)">云梦泽智慧平台电子招标投标应用辽宁瑞邦石油技术发展有限公司5440</text>
<text transform="translate(594 1080) rotate(-15.700)">云梦泽智慧平台电子招标投标应用辽宁瑞邦石油技术发展有限公司5440</text>
<text transform="translate(1175 1080) rotate(-15.700)">云梦泽智慧平台电子招标投标应用辽宁瑞邦石油技术发展有限公司5440</text>
</g>
<!-- red annotation -->
<rect x="1331.500" y="761.500" width="167" height="25" stroke="#c80f1e" stroke-width="3"/>
<!-- status icons -->
<path d="M243.500 1020.500h5v13h-5zM253 1020h-2v13h2M253 1022l5 6M258 1022l-5 6" stroke="#666"/>
<path d="M471 1023a5 5 0 0 0 3 9M476 1020v5M473 1028l9 7M482 1028l-9 7" stroke="#444" stroke-width="1.200"/>
<g stroke="#666"><path d="M1634.500 1021.500h14v12h-14zM1641.500 1021v13M1636 1024h4M1636 1027h4M1636 1030h4M1643 1024h4M1643 1027h4M1643 1030h4"/><path d="M1674.500 1021.500h13v12h-13zM1676 1024h10M1676 1026.500h10M1676 1029h10M1676 1031.500h10"/><path d="M1714.500 1021.500h11v9h-4M1714.500 1021.500v12h4M1716 1024h8M1716 1027h5"/></g>
<circle cx="1725" cy="1030" r="3.500" fill="#666"/>
<path d="M1747 1027h8M1760 1027h100M1864 1027h8M1868 1023v8M1811 1024v6" stroke="#444"/>
<rect x="1813" y="1022" width="5" height="11" fill="#444"/>
</svg>
</body></html>
